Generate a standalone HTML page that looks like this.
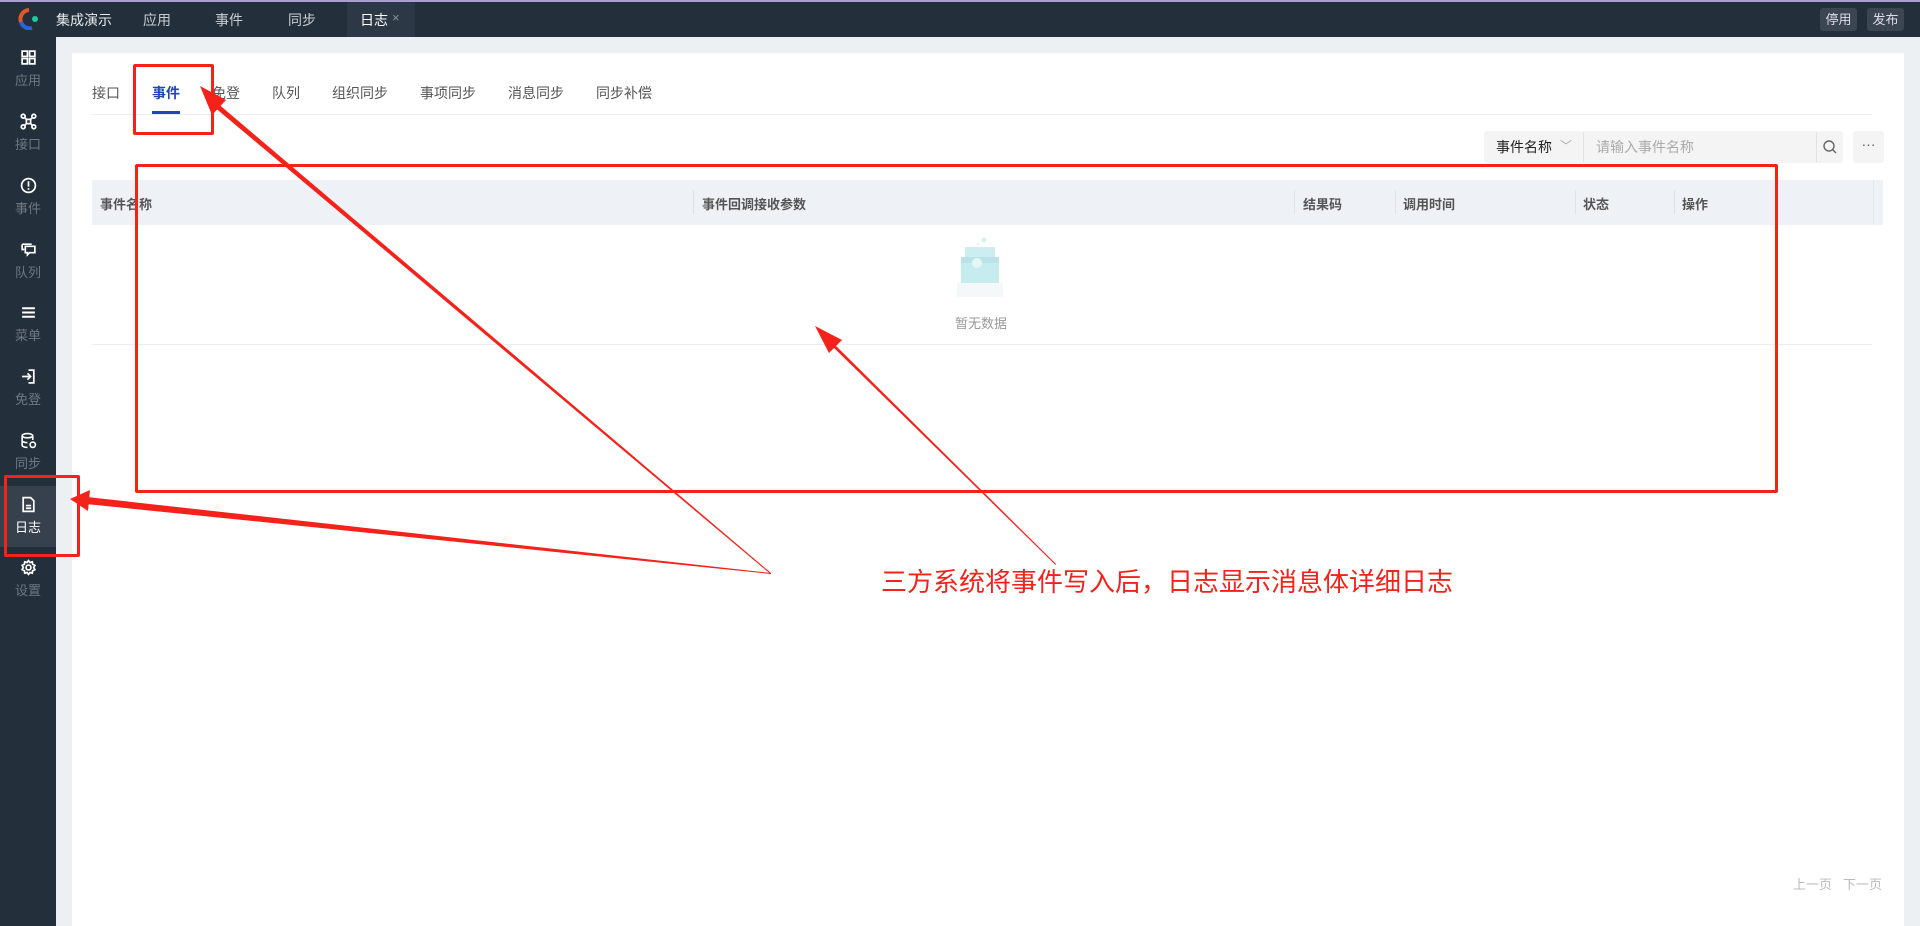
<!DOCTYPE html>
<html><head><meta charset="utf-8">
<style>
*{margin:0;padding:0;box-sizing:border-box}
body{width:1920px;height:926px;overflow:hidden;background:#edf0f3;font-family:"Liberation Sans","Noto Sans CJK SC",sans-serif;font-size:14px;color:#333;position:relative}
.a{position:absolute;white-space:nowrap}
#top{position:absolute;left:0;top:0;width:1920px;height:37px;background:#232f3a;border-top:2px solid #a79fcf}
#side{position:absolute;left:0;top:37px;width:56px;height:889px;background:#232f3a}
.si{position:absolute;left:0;width:56px;text-align:center;color:#6f7882;font-size:13px}
.si svg{display:block;margin:0 auto 4px}
#panel{position:absolute;left:72px;top:53px;width:1832px;height:873px;background:#fff}
.tab{position:absolute;top:83px;font-size:14px;color:#555}
.th{position:absolute;top:194px;font-size:13px;font-weight:bold;color:#555}
.dv{position:absolute;top:190px;width:1px;height:24px;background:#dfe3e8}
</style></head><body>
<div id="top"></div>
<svg class="a" style="left:18px;top:8px" width="22" height="22" viewBox="0 0 22 22"><path d="M11 2 A9 9 0 0 0 3 14" stroke="#e0582a" stroke-width="4" fill="none"/><path d="M3 14 A9 9 0 0 0 14 20" stroke="#2b63d9" stroke-width="4" fill="none"/><circle cx="17" cy="11" r="3" fill="#1fc9a0"/></svg>
<div class="a" style="left:56px;top:10px;color:#e6e9ec;font-size:14px">集成演示</div>
<div class="a" style="left:143px;top:10px;color:#c8cdd2">应用</div>
<div class="a" style="left:215px;top:10px;color:#c8cdd2">事件</div>
<div class="a" style="left:288px;top:10px;color:#c8cdd2">同步</div>
<div class="a" style="left:347px;top:2px;width:68px;height:35px;background:#2c3845"></div>
<div class="a" style="left:360px;top:10px;color:#fff">日志</div>
<div class="a" style="left:392px;top:10px;color:#8a939c;font-size:13px">×</div>
<div class="a" style="left:1820px;top:8px;width:37px;height:23px;background:#3b4650;border-radius:3px;color:#dde;font-size:13px;text-align:center;line-height:23px">停用</div>
<div class="a" style="left:1867px;top:8px;width:37px;height:23px;background:#3b4650;border-radius:3px;color:#dde;font-size:13px;text-align:center;line-height:23px">发布</div>

<div id="side">
<div class="si" style="top:12px"><svg width="17" height="17" viewBox="0 0 16 16" fill="none" stroke="#fff" stroke-width="1.6"><rect x="2" y="2" width="5" height="5"/><rect x="9" y="2" width="5" height="5"/><rect x="2" y="9" width="5" height="5"/><rect x="9" y="9" width="5" height="5"/></svg>应用</div>
<div class="si" style="top:76px"><svg width="17" height="17" viewBox="0 0 16 16" fill="none" stroke="#fff" stroke-width="1.6"><circle cx="3" cy="3" r="1.8"/><circle cx="13" cy="3" r="1.8"/><circle cx="3" cy="13" r="1.8"/><circle cx="13" cy="13" r="1.8"/><rect x="6" y="6" width="4" height="4"/><path d="M4.5 4.5L6 6M11.5 4.5L10 6M4.5 11.5L6 10M11.5 11.5L10 10"/></svg>接口</div>
<div class="si" style="top:140px"><svg width="17" height="17" viewBox="0 0 16 16" fill="none" stroke="#fff" stroke-width="1.6"><circle cx="8" cy="8" r="6.5"/><path d="M8 4v5M8 10.5v1.5"/></svg>事件</div>
<div class="si" style="top:204px"><svg width="17" height="17" viewBox="0 0 16 16" fill="none" stroke="#fff" stroke-width="1.6"><path d="M2 3h9M2 3v5h2M5 5h9v6H9l-2 2v-2H5z"/></svg>队列</div>
<div class="si" style="top:267px"><svg width="17" height="17" viewBox="0 0 16 16" fill="none" stroke="#fff" stroke-width="1.8"><path d="M2 4h12M2 8h12M2 12h12"/></svg>菜单</div>
<div class="si" style="top:331px"><svg width="17" height="17" viewBox="0 0 16 16" fill="none" stroke="#fff" stroke-width="1.6"><path d="M8 2h5v12H8M2 8h8M7 5l3 3-3 3"/></svg>免登</div>
<div class="si" style="top:395px"><svg width="17" height="17" viewBox="0 0 16 16" fill="none" stroke="#fff" stroke-width="1.5"><ellipse cx="7" cy="3.5" rx="5" ry="2"/><path d="M2 3.5v9c0 1 2 2 5 2M12 3.5v4M2 8c0 1 2 2 5 2"/><circle cx="12" cy="12" r="2.5"/></svg>同步</div>
<div class="a" style="left:0;top:449px;width:56px;height:61px;background:#37414d"></div>
<div class="si" style="top:459px;color:#fff"><svg width="17" height="17" viewBox="0 0 16 16" fill="none" stroke="#fff" stroke-width="1.6"><path d="M3 1.5h7l3 3v10H3z M5.5 9h5M5.5 11.5h5"/></svg>日志</div>
<div class="si" style="top:522px"><svg width="17" height="17" viewBox="0 0 16 16" fill="none" stroke="#fff" stroke-width="1.6"><circle cx="8" cy="8" r="2.3"/><path d="M8 1.5l1.4 1.8 2.2-.6.3 2.3 2.1 1-1.1 2 1.1 2-2.1 1-.3 2.3-2.2-.6L8 14.5l-1.4-1.8-2.2.6-.3-2.3-2.1-1 1.1-2-1.1-2 2.1-1 .3-2.3 2.2.6z"/></svg>设置</div>
</div>

<div id="panel"></div>
<div class="tab" style="left:92px">接口</div>
<div class="tab" style="left:152px;color:#1d46b7;font-weight:bold">事件</div>
<div class="a" style="left:152px;top:111px;width:28px;height:3px;background:#1d46b7"></div>
<div class="tab" style="left:212px">免登</div>
<div class="tab" style="left:272px">队列</div>
<div class="tab" style="left:332px">组织同步</div>
<div class="tab" style="left:420px">事项同步</div>
<div class="tab" style="left:508px">消息同步</div>
<div class="tab" style="left:596px">同步补偿</div>
<div class="a" style="left:92px;top:114px;width:1780px;height:1px;background:#ebedf0"></div>

<div class="a" style="left:1484px;top:131px;width:359px;height:32px;background:#f4f4f5;border-radius:3px"></div>
<div class="a" style="left:1496px;top:137px;font-size:14px;color:#222">事件名称</div>
<div class="a" style="left:1560px;top:137px;font-size:12px;color:#aaa">﹀</div>
<div class="a" style="left:1583px;top:132px;width:1px;height:30px;background:#e2e2e2"></div>
<div class="a" style="left:1596px;top:137px;font-size:14px;color:#aaa">请输入事件名称</div>
<div class="a" style="left:1816px;top:132px;width:1px;height:30px;background:#e2e2e2"></div>
<svg class="a" style="left:1822px;top:139px" width="16" height="16" viewBox="0 0 16 16" fill="none" stroke="#666" stroke-width="1.4"><circle cx="7" cy="7" r="5"/><path d="M10.5 10.5L14 14"/></svg>
<div class="a" style="left:1853px;top:131px;width:31px;height:32px;background:#f4f4f5;border-radius:3px;text-align:center;line-height:26px;color:#555">···</div>

<div class="a" style="left:92px;top:180px;width:1791px;height:45px;background:#eef1f5"></div>
<div class="a" style="left:1873px;top:180px;width:1px;height:45px;background:#e2e6eb"></div>
<div class="th" style="left:100px">事件名称</div>
<div class="dv" style="left:693px"></div><div class="th" style="left:702px">事件回调接收参数</div>
<div class="dv" style="left:1294px"></div><div class="th" style="left:1303px">结果码</div>
<div class="dv" style="left:1395px"></div><div class="th" style="left:1403px">调用时间</div>
<div class="dv" style="left:1575px"></div><div class="th" style="left:1583px">状态</div>
<div class="dv" style="left:1674px"></div><div class="th" style="left:1682px">操作</div>

<svg class="a" style="left:955px;top:235px" width="56" height="65" viewBox="0 0 56 65"><circle cx="29" cy="5" r="2.5" fill="#d6f0f2"/><circle cx="23" cy="9" r="1.3" fill="#e2f4f5"/><rect x="10" y="12" width="30" height="14" fill="#cdeef0"/><rect x="6" y="22" width="38" height="6" fill="#b9e3e8"/><rect x="6" y="28" width="38" height="20" fill="#c6ecef"/><rect x="2" y="48" width="46" height="14" fill="#f5f8f9"/><circle cx="22" cy="28" r="5" fill="#e6f6f7"/></svg>
<div class="a" style="left:955px;top:313px;font-size:13px;color:#999">暂无数据</div>
<div class="a" style="left:92px;top:344px;width:1780px;height:1px;background:#ebedf0"></div>

<div class="a" style="left:1793px;top:874px;font-size:13px;color:#bbb">上一页</div>
<div class="a" style="left:1843px;top:874px;font-size:13px;color:#bbb">下一页</div>

<div class="a" style="left:133px;top:64px;width:81px;height:71px;border:3px solid #f5221b;border-radius:2px"></div>
<div class="a" style="left:135px;top:164px;width:1643px;height:329px;border:3px solid #f5221b;border-radius:2px"></div>
<div class="a" style="left:4px;top:475px;width:76px;height:82px;border:3px solid #f5221b;border-radius:2px"></div>
<svg class="a" style="left:0;top:0" width="1920" height="926" viewBox="0 0 1920 926">
<g fill="#f5221b">
<polygon points="1056,564 1055.5,565 829,343 831,341"/>
<polygon points="815,326 842,340 829,353"/>
<polygon points="771,573 770.5,574 213,106 216,102"/>
<polygon points="200,86 226,100 212,115"/>
<polygon points="771,573 771,574 86,504 87,497"/>
<polygon points="70,499 90,490 88,511"/>
</g>
</svg>
<div class="a" style="left:881px;top:562px;font-size:26px;color:#f5221b">三方系统将事件写入后，日志显示消息体详细日志</div>
</body></html>
